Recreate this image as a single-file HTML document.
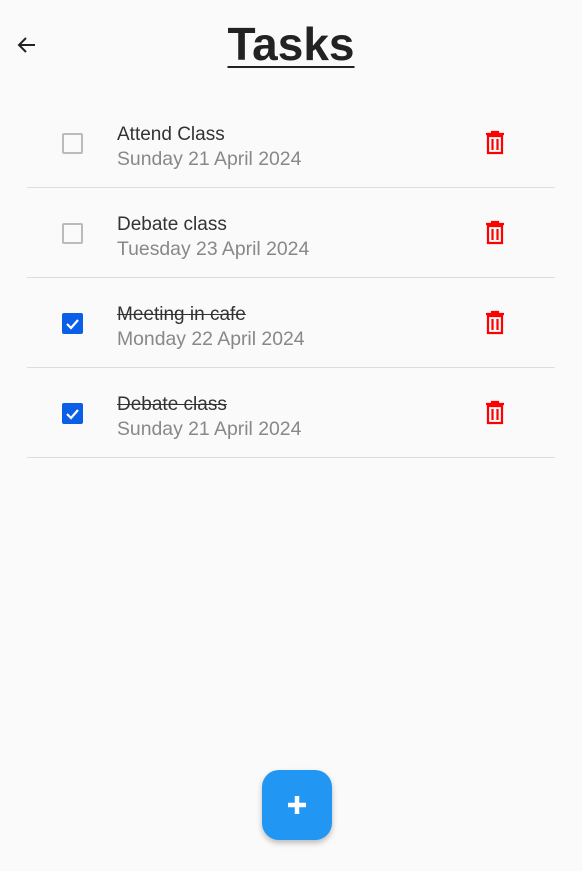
<!DOCTYPE html>
<html><head><style>
body{margin:0;width:582px;height:871px;background:#fafafa;font-family:"Liberation Sans",sans-serif;position:relative;overflow:hidden}
.title{position:absolute;top:17px;left:0;width:582px;text-align:center;font-size:46px;font-weight:bold;color:#222;text-decoration:underline;text-decoration-thickness:2px;text-underline-offset:6px}
.back{position:absolute;left:15px;top:33px}
.row{position:absolute;left:27px;width:528px;height:90px;border-bottom:1px solid #ddd}
.cb{position:absolute;left:35px;top:36px;width:17px;height:17px;border:2px solid #bbb;border-radius:2px}
.cb.on{background:#0b5ee8;border-color:#0b5ee8}
.t{position:absolute;left:90px;top:27px;font-size:19px;color:#333}
.t.s{text-decoration:line-through}
.d{position:absolute;left:90px;top:51px;font-size:19.4px;color:#888}
.tr{position:absolute;left:457px;top:33px}
.fab{position:absolute;left:262px;top:770px;width:70px;height:70px;border-radius:17px;background:#2196f3;box-shadow:0 3px 6px rgba(0,0,0,.25)}
</style></head><body>
<svg class="back" width="24" height="24" viewBox="0 0 24 24"><path d="M20 12H5M11 5l-7 7 7 7" stroke="#222" stroke-width="2" fill="none"/></svg>
<div class="title">Tasks</div>

<div class="row" style="top:97px"><div class="cb"></div><div class="t">Attend Class</div><div class="d">Sunday 21 April 2024</div>
<svg class="tr" width="22" height="26" viewBox="0 0 22 26"><path d="M2 4h18M8 4V2h6v2M4 6h14v17H4zM8.5 9v11M13.5 9v11" stroke="#f00" stroke-width="2.2" fill="none"/></svg></div>
<div class="row" style="top:187px"><div class="cb"></div><div class="t">Debate class</div><div class="d">Tuesday 23 April 2024</div>
<svg class="tr" width="22" height="26" viewBox="0 0 22 26"><path d="M2 4h18M8 4V2h6v2M4 6h14v17H4zM8.5 9v11M13.5 9v11" stroke="#f00" stroke-width="2.2" fill="none"/></svg></div>
<div class="row" style="top:277px"><div class="cb on"><svg width="17" height="17" viewBox="0 0 17 17"><path d="M3 9l4 4 7-8" stroke="#fff" stroke-width="2.2" fill="none"/></svg></div><div class="t s">Meeting in cafe</div><div class="d">Monday 22 April 2024</div>
<svg class="tr" width="22" height="26" viewBox="0 0 22 26"><path d="M2 4h18M8 4V2h6v2M4 6h14v17H4zM8.5 9v11M13.5 9v11" stroke="#f00" stroke-width="2.2" fill="none"/></svg></div>
<div class="row" style="top:367px"><div class="cb on"><svg width="17" height="17" viewBox="0 0 17 17"><path d="M3 9l4 4 7-8" stroke="#fff" stroke-width="2.2" fill="none"/></svg></div><div class="t s">Debate class</div><div class="d">Sunday 21 April 2024</div>
<svg class="tr" width="22" height="26" viewBox="0 0 22 26"><path d="M2 4h18M8 4V2h6v2M4 6h14v17H4zM8.5 9v11M13.5 9v11" stroke="#f00" stroke-width="2.2" fill="none"/></svg></div>

<div class="fab"><svg width="70" height="70" viewBox="0 0 70 70"><path d="M35 26v18M26 35h18" stroke="#fff" stroke-width="4.5"/></svg></div>
</body></html>
